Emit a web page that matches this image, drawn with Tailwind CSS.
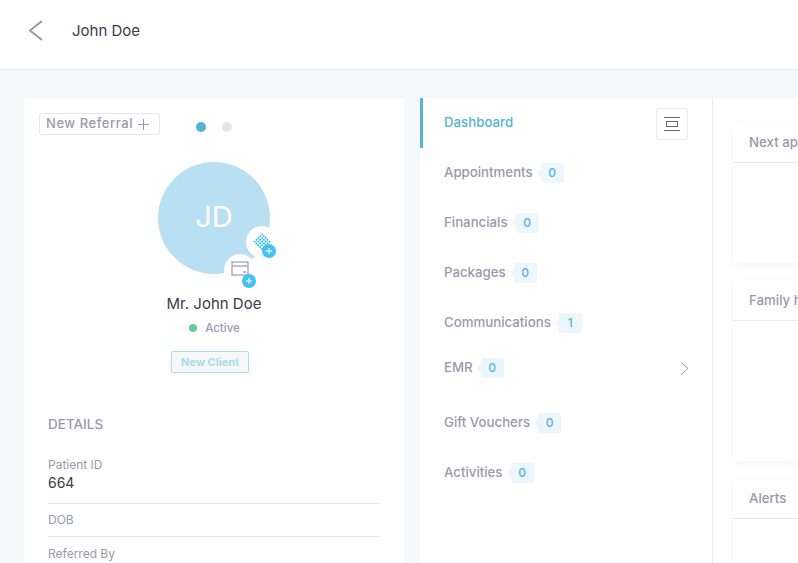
<!DOCTYPE html>
<html lang="en">
<head>
    <meta charset="UTF-8">
    <title>John Doe</title>
    <script src="https://cdn.jsdelivr.net/npm/@tailwindcss/browser@4"></script>
</head>
<body class="h-[563px] overflow-hidden bg-[#f6f7f9] font-['Inter',sans-serif]">
    <!-- Header -->
    <header class="h-[70px] bg-white border-b border-[#e9e9ec] flex items-center pb-[7px]">
        <svg class="ml-[28px] w-[16px] h-[22px]" viewBox="0 0 16 22" fill="none" stroke="#9a99ab" stroke-width="2"><path d="M14 1 L2 10.5 L14 20"/></svg>
        <span class="ml-[28px] text-[15px] text-[#3b3b45]">John Doe</span>
    </header>

    <div class="flex pt-[28px] pl-[24px] h-[493px] overflow-hidden">
        <!-- Patient card -->
        <section class="w-[380px] shrink-0 bg-white overflow-hidden">
            <div class="flex items-center pl-[15px] pt-[15px]">
                <button class="w-[121px] h-[22px] pl-[6px] flex items-center gap-[5px] border border-[#e8e8ec] rounded-[3px] text-[13px] font-medium tracking-[0.55px] text-[#9a99ab]">
                    New Referral
                    <svg class="w-[11px] h-[11px]" viewBox="0 0 11 11" stroke="#9a99ab" stroke-width="1"><path d="M5.5 0v11M0 5.5h11"/></svg>
                </button>
                <span class="ml-[36px] mt-[6px] w-[10px] h-[10px] rounded-full bg-[#52b3d5]"></span>
                <span class="ml-[16px] mt-[6px] w-[10px] h-[10px] rounded-full bg-[#e4e5ea]"></span>
            </div>

            <div class="flex flex-col items-center mt-[27px]">
                <div class="relative w-[112px] h-[112px] pb-[3px] rounded-full bg-[#b8e0f2] flex items-center justify-center text-[29px] text-white">
                    JD
                    <!-- service badge -->
                    <span class="absolute left-[88px] top-[64px] w-[32px] h-[32px] rounded-full bg-white flex items-center justify-center">
                        <svg class="w-[18px] h-[18px] -ml-[1px]" viewBox="0 0 18 18">
                            <defs>
                                <pattern id="dots" width="2.6" height="2.6" patternUnits="userSpaceOnUse" patternTransform="rotate(45 9 9)">
                                    <rect width="1.8" height="1.8" fill="#2fb9dc"/>
                                </pattern>
                            </defs>
                            <path d="M9 0L18 9L9 18L0 9Z" fill="url(#dots)"/>
                        </svg>
                        <span class="absolute left-[16px] top-[18px] w-[14px] h-[14px] rounded-full bg-[#45c1f7] flex items-center justify-center">
                            <svg class="w-[6px] h-[6px]" viewBox="0 0 6 6" stroke="#d9f3ff" stroke-width="1.4"><path d="M3 0v6M0 3h6"/></svg>
                        </span>
                    </span>
                    <!-- card badge -->
                    <span class="absolute left-[66px] top-[92px] w-[32px] h-[32px] rounded-full bg-white flex items-center justify-center">
                        <svg class="w-[18px] h-[15px] -mt-[3px] -ml-[1px]" viewBox="0 0 18 15" fill="none" stroke="#9a99ab" stroke-width="1.2"><rect x="1" y="1" width="16" height="13"/><path d="M1 5h16"/><path d="M12 11h3" stroke-width="1.5"/></svg>
                        <span class="absolute left-[18px] top-[20px] w-[14px] h-[14px] rounded-full bg-[#45c1f7] flex items-center justify-center">
                            <svg class="w-[6px] h-[6px]" viewBox="0 0 6 6" stroke="#d9f3ff" stroke-width="1.4"><path d="M3 0v6M0 3h6"/></svg>
                        </span>
                    </span>
                </div>
                <h2 class="mt-[19px] text-[15px] leading-[22px] text-[#3b3b45]">Mr. John Doe</h2>
                <div class="mt-[4px] flex items-center gap-[8px] text-[11.5px] leading-[18px] font-medium text-[#9a99ab]">
                    <span class="ml-[1px] w-[8px] h-[8px] rounded-full bg-[#62cf96]"></span>Active
                </div>
                <span class="mt-[14px] -ml-[8px] w-[78px] h-[22px] flex items-center justify-center rounded-[2px] border border-[#aadcea] bg-[#f6f7f9] text-[11px] font-bold text-[#aadcec]">New Client</span>
            </div>

            <div class="mx-[24px] mt-[41px] text-[#9a99ab]">
                <h3 class="text-[13.5px] leading-[20px] font-medium">DETAILS</h3>
                <div class="mt-[23px] pb-[10px] border-b border-[#e9e9ec] w-[332px]">
                    <div class="text-[12px] leading-[16px]">Patient ID</div>
                    <div class="text-[14px] leading-[20px] text-[#3b3b45]">664</div>
                </div>
                <div class="h-[33px] flex items-center border-b border-[#e9e9ec] w-[332px] text-[12px]">DOB</div>
                <div class="h-[33px] flex items-center w-[332px] text-[12px]">Referred By</div>
            </div>
        </section>

        <!-- Side navigation -->
        <nav class="ml-[16px] w-[293px] shrink-0 bg-white border-r border-[#e9e9ec] text-[13.25px] font-medium text-[#9a99ab]">
            <div class="h-[50px] flex items-center justify-between border-l-[3px] border-[#52b3d5] pl-[21px] pr-[24px] text-[#52b3d5]">
                <span class="-mt-[1px]">Dashboard</span>
                <button class="w-[32px] h-[32px] mt-[2px] rounded-[3px] border border-[#ebebef] flex items-center justify-center">
                    <svg class="w-[16px] h-[14px]" viewBox="0 0 16 14" fill="none" stroke="#66666e" stroke-width="1"><path d="M0 .5h16M0 13.5h16"/><rect x="2.5" y="4.5" width="11" height="5"/></svg>
                </button>
            </div>
            <div class="h-[50px] pl-[24px] flex items-center"><span class="-mt-[1px]">Appointments</span><span class="relative ml-[8px] w-[23px] h-[20px] rounded-[2px] bg-[#edf6fc] flex items-center justify-center text-[12px] text-[#52b3d5] before:absolute before:-left-[3px] before:top-[7px] before:w-[6px] before:h-[6px] before:rotate-45 before:bg-[#edf6fc]">0</span></div>
            <div class="h-[50px] pl-[24px] flex items-center"><span class="-mt-[1px]">Financials</span><span class="relative ml-[8px] w-[23px] h-[20px] rounded-[2px] bg-[#edf6fc] flex items-center justify-center text-[12px] text-[#52b3d5] before:absolute before:-left-[3px] before:top-[7px] before:w-[6px] before:h-[6px] before:rotate-45 before:bg-[#edf6fc]">0</span></div>
            <div class="h-[50px] pl-[24px] flex items-center"><span class="-mt-[1px]">Packages</span><span class="relative ml-[8px] w-[23px] h-[20px] rounded-[2px] bg-[#edf6fc] flex items-center justify-center text-[12px] text-[#52b3d5] before:absolute before:-left-[3px] before:top-[7px] before:w-[6px] before:h-[6px] before:rotate-45 before:bg-[#edf6fc]">0</span></div>
            <div class="h-[50px] pl-[24px] flex items-center"><span class="-mt-[1px]">Communications</span><span class="relative ml-[8px] w-[23px] h-[20px] rounded-[2px] bg-[#edf6fc] flex items-center justify-center text-[12px] text-[#52b3d5] before:absolute before:-left-[3px] before:top-[7px] before:w-[6px] before:h-[6px] before:rotate-45 before:bg-[#edf6fc]">1</span></div>
            <div class="h-[40px] mb-[10px] pl-[24px] pr-[23px] flex items-center"><span class="-mt-[1px]">EMR</span><span class="relative ml-[8px] w-[23px] h-[20px] rounded-[2px] bg-[#edf6fc] flex items-center justify-center text-[12px] text-[#52b3d5] before:absolute before:-left-[3px] before:top-[7px] before:w-[6px] before:h-[6px] before:rotate-45 before:bg-[#edf6fc]">0</span>
                <svg class="ml-auto w-[9px] h-[13px]" viewBox="0 0 9 13" fill="none" stroke="#9a99ab" stroke-width="1"><path d="M1 .5l7 6-7 6"/></svg>
            </div>
            <div class="h-[50px] pl-[24px] flex items-center"><span class="-mt-[1px]">Gift Vouchers</span><span class="relative ml-[8px] w-[23px] h-[20px] rounded-[2px] bg-[#edf6fc] flex items-center justify-center text-[12px] text-[#52b3d5] before:absolute before:-left-[3px] before:top-[7px] before:w-[6px] before:h-[6px] before:rotate-45 before:bg-[#edf6fc]">0</span></div>
            <div class="h-[50px] pl-[24px] flex items-center"><span class="-mt-[1px]">Activities</span><span class="relative ml-[8px] w-[23px] h-[20px] rounded-[2px] bg-[#edf6fc] flex items-center justify-center text-[12px] text-[#52b3d5] before:absolute before:-left-[3px] before:top-[7px] before:w-[6px] before:h-[6px] before:rotate-45 before:bg-[#edf6fc]">0</span></div>
        </nav>

        <!-- Right column -->
        <main class="flex-1 min-w-0 bg-white pl-[20px] pt-[25px] flex flex-col gap-[18px] text-[13.25px] font-medium text-[#9a99ab]">
            <div class="h-[140px] shrink-0 rounded-l-[4px] bg-[#fefefe] shadow-[0_2px_10px_rgba(0,0,0,0.05)] overflow-hidden">
                <div class="h-[40px] pl-[16px] flex items-center border-b border-[#e9e9ec] whitespace-nowrap">Next appointment</div>
            </div>
            <div class="h-[180px] shrink-0 rounded-l-[4px] bg-[#fefefe] shadow-[0_2px_10px_rgba(0,0,0,0.05)] overflow-hidden">
                <div class="h-[40px] pl-[16px] flex items-center border-b border-[#e9e9ec] whitespace-nowrap">Family history</div>
            </div>
            <div class="flex-1 rounded-tl-[4px] bg-[#fefefe] shadow-[0_2px_10px_rgba(0,0,0,0.05)] overflow-hidden">
                <div class="h-[40px] pl-[16px] flex items-center border-b border-[#e9e9ec]">Alerts</div>
            </div>
        </main>
    </div>
</body>
</html>
